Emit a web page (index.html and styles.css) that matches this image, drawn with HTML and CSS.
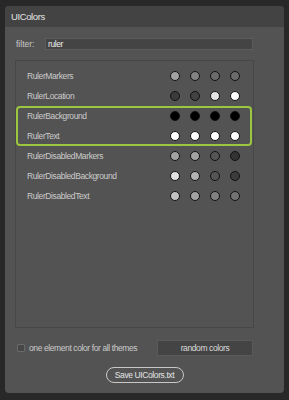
FILE: index.html
```html
<!DOCTYPE html>
<html>
	<head>
		<meta charset="utf-8">
		<title>UIColors</title>
		<link rel="stylesheet" href="styles.css">
	</head>
	<body>
		<div class="panel">
			<div class="titlebar">UIColors</div>
			<div class="content">
				<label class="filter">filter:
					<input class="filter-input" type="text" value="ruler">
				</label>
				<div class="list">
					<div class="row">
						<span class="name">RulerMarkers</span>
						<span class="dots"><i style="background:#a2a2a2"></i><i style="background:#828282"></i><i style="background:#6b6b6b"></i><i style="background:#6b6b6b"></i></span>
					</div>
					<div class="row">
						<span class="name">RulerLocation</span>
						<span class="dots"><i style="background:#3b3b3b"></i><i style="background:#424242"></i><i style="background:#e4e4e4"></i><i style="background:#ffffff"></i></span>
					</div>
					<div class="group">
						<div class="row">
							<span class="name">RulerBackground</span>
							<span class="dots"><i style="background:#000"></i><i style="background:#000"></i><i style="background:#000"></i><i style="background:#000"></i></span>
						</div>
						<div class="row">
							<span class="name">RulerText</span>
							<span class="dots"><i style="background:#fff"></i><i style="background:#fff"></i><i style="background:#fff"></i><i style="background:#fff"></i></span>
						</div>
					</div>
					<div class="row">
						<span class="name">RulerDisabledMarkers</span>
						<span class="dots"><i style="background:#a2a2a2"></i><i style="background:#a2a2a2"></i><i style="background:#555555"></i><i style="background:#333333"></i></span>
					</div>
					<div class="row">
						<span class="name">RulerDisabledBackground</span>
						<span class="dots"><i style="background:#e2e2e2"></i><i style="background:#b2b2b2"></i><i style="background:#555555"></i><i style="background:#3b3b3b"></i></span>
					</div>
					<div class="row">
						<span class="name">RulerDisabledText</span>
						<span class="dots"><i style="background:#c2c2c2"></i><i style="background:#a2a2a2"></i><i style="background:#828282"></i><i style="background:#727272"></i></span>
					</div>
				</div>
				<div class="options">
					<label class="check"><span class="box"></span>one element color for all themes</label>
					<button class="random">random colors</button>
				</div>
				<div class="save-row">
					<button class="save">Save UIColors.txt</button>
				</div>
			</div>
		</div>
	</body>
</html>
```

FILE: styles.css
```css
body {
	margin: 0;
	padding: 6px 5px;
	background: #282828;
	font-family: "Liberation Sans", Arial, sans-serif;
	font-size: 8.5px;
	letter-spacing: -0.4px;
	color: #cbcbcb;
}

.panel {
	width: 279px;
	height: 387px;
	background: #535353;
	border-radius: 4px;
	overflow: hidden;
	display: flex;
	flex-direction: column;
}

.titlebar {
	height: 21px;
	line-height: 21px;
	padding-left: 6px;
	background: #434343;
	color: #e4e4e4;
	font-size: 9.5px;
}

.content {
	padding: 11px 0 10px 10px;
	display: flex;
	flex-direction: column;
}

.filter {
	display: flex;
	align-items: center;
	justify-content: space-between;
	width: 237px;
	height: 12px;
	padding-left: 1px;
	color: #c8c8c8;
	letter-spacing: 0;
}

.filter-input {
	margin: 0;
	width: 208px;
	height: 12px;
	box-sizing: border-box;
	padding: 0 0 0 2px;
	background: #444444;
	border: 1px solid #5c5c5c;
	color: #ececec;
	font: inherit;
	letter-spacing: -0.4px;
	outline: none;
}

.list {
	margin-top: 10px;
	width: 239px;
	height: 268px;
	box-sizing: border-box;
	border: 1px solid #474747;
	padding-top: 5px;
}

.row {
	height: 20px;
	display: flex;
	align-items: center;
	justify-content: space-between;
	padding: 0 13px 0 11px;
}

.group {
	border-radius: 4px;
	outline: 2px solid #9cc63e;
	outline-offset: -2px;
	margin-right: 1px;
}

.group .row {
	padding-right: 12px;
}

.dots {
	display: flex;
	gap: 10px;
}

.dots i {
	width: 10px;
	height: 10px;
	box-sizing: border-box;
	border: 1.5px solid #111;
	border-radius: 50%;
}

.options {
	margin-top: 12px;
	width: 238px;
	height: 16px;
	display: flex;
	align-items: center;
	justify-content: space-between;
}

.check {
	display: flex;
	align-items: center;
	gap: 4px;
	padding-left: 2px;
}

.box {
	width: 8px;
	height: 8px;
	box-sizing: border-box;
	background: #474747;
	border: 1px solid #6a6a6a;
	border-radius: 1px;
}

.random {
	width: 96px;
	height: 16px;
	margin: 0;
	padding: 0;
	background: #444444;
	border: 1px solid #5a5a5a;
	color: #dcdcdc;
	font: inherit;
	letter-spacing: inherit;
}

.save-row {
	margin: 11px 0 0 -10px;
	display: flex;
	justify-content: center;
}

.save {
	width: 78px;
	height: 16px;
	margin: 0;
	padding: 0;
	background: #535353;
	border: 1px solid #c8c8c8;
	border-radius: 8px;
	color: #e4e4e4;
	font: inherit;
	letter-spacing: inherit;
}
```
